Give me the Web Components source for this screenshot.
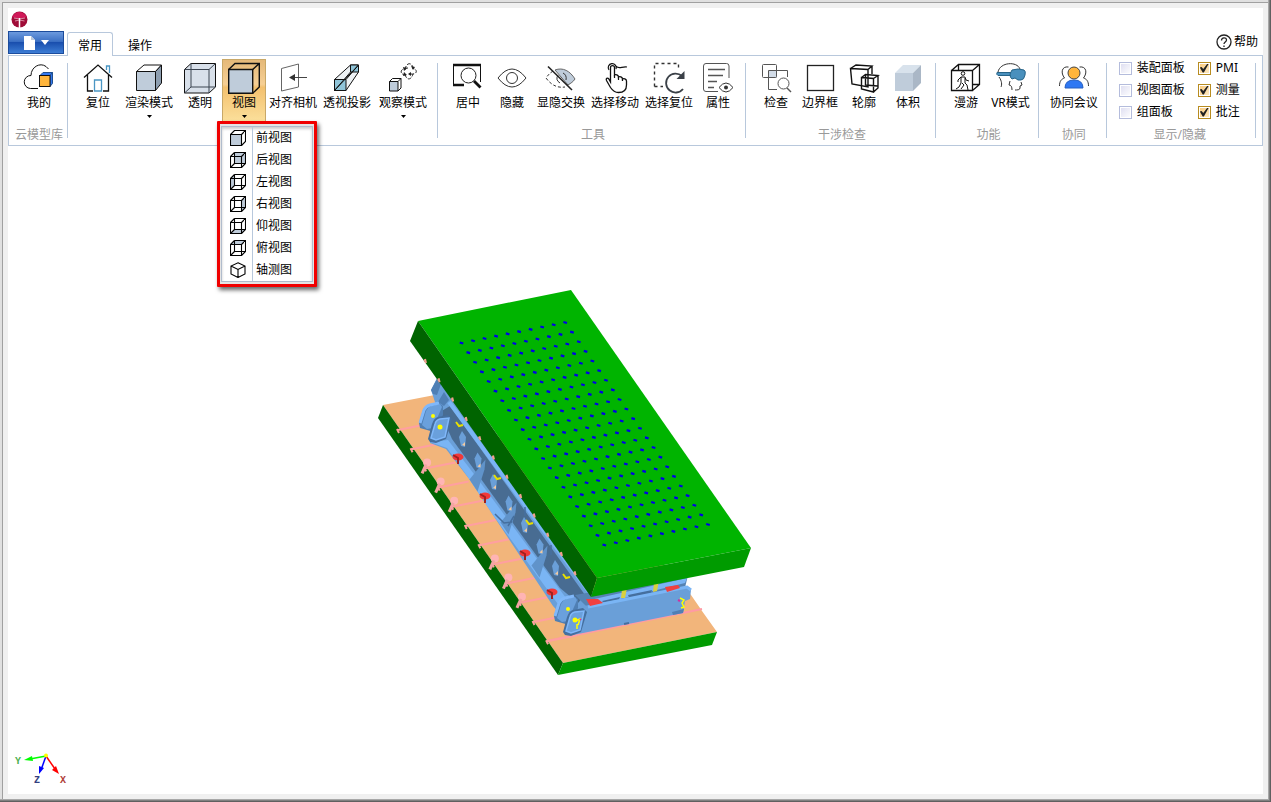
<!DOCTYPE html>
<html lang="zh-CN">
<head>
<meta charset="utf-8">
<title>三维模型查看器</title>
<style>
  html, body {
    height: 100%;
    margin: 0;
  }

  body {
    font: 12px/16px "Noto Sans", "Noto Sans CJK SC", sans-serif;
    color: #000;
    overflow: hidden;
  }
</style>
</head>
<body>
<app-window>
  <app-tabs slot="header"></app-tabs>
  <ribbon-bar slot="header">
    <ribbon-group label="云模型库" class="first">
      <ribbon-button icon="cloud" label="我的"></ribbon-button>
    </ribbon-group>
    <ribbon-group>
      <ribbon-button icon="house" label="复位"></ribbon-button>
      <ribbon-button icon="render" label="渲染模式" drop></ribbon-button>
      <ribbon-button icon="glass" label="透明"></ribbon-button>
      <ribbon-button icon="view" label="视图" drop active>
        <view-menu slot="menu">
          <view-item icon="front">前视图</view-item>
          <view-item icon="back">后视图</view-item>
          <view-item icon="left">左视图</view-item>
          <view-item icon="right">右视图</view-item>
          <view-item icon="bottom">仰视图</view-item>
          <view-item icon="top">俯视图</view-item>
          <view-item icon="iso">轴测图</view-item>
        </view-menu>
      </ribbon-button>
      <ribbon-button icon="align" label="对齐相机"></ribbon-button>
      <ribbon-button icon="perspective" label="透视投影"></ribbon-button>
      <ribbon-button icon="orbit" label="观察模式" drop></ribbon-button>
    </ribbon-group>
    <ribbon-group label="工具">
      <ribbon-button icon="center" label="居中"></ribbon-button>
      <ribbon-button icon="eye" label="隐藏"></ribbon-button>
      <ribbon-button icon="swap" label="显隐交换"></ribbon-button>
      <ribbon-button icon="hand" label="选择移动"></ribbon-button>
      <ribbon-button icon="reselect" label="选择复位"></ribbon-button>
      <ribbon-button icon="props" label="属性"></ribbon-button>
    </ribbon-group>
    <ribbon-group label="干涉检查">
      <ribbon-button icon="check" label="检查"></ribbon-button>
      <ribbon-button icon="bounds" label="边界框"></ribbon-button>
      <ribbon-button icon="outline" label="轮廓"></ribbon-button>
      <ribbon-button icon="volume" label="体积"></ribbon-button>
    </ribbon-group>
    <ribbon-group label="功能">
      <ribbon-button icon="walk" label="漫游"></ribbon-button>
      <ribbon-button icon="vr" label="VR模式"></ribbon-button>
    </ribbon-group>
    <ribbon-group label="协同">
      <ribbon-button icon="meeting" label="协同会议"></ribbon-button>
    </ribbon-group>
    <ribbon-group label="显示/隐藏" class="checks">
      <ribbon-check label="装配面板"></ribbon-check>
      <ribbon-check label="PMI" checked></ribbon-check>
      <ribbon-check label="视图面板"></ribbon-check>
      <ribbon-check label="测量" checked></ribbon-check>
      <ribbon-check label="组面板"></ribbon-check>
      <ribbon-check label="批注" checked></ribbon-check>
    </ribbon-group>
  </ribbon-bar>
  <model-viewport></model-viewport>
</app-window>

<script>
// 32x32 ribbon icons
const ICONS = {
  cloud: `
    <path d="M15 26.500H7.500A6.500 6.500 0 0 1 8 13.500C8 5 17 0 23 4.500L25.500 7" />
    <path d="M17 13.500l3-3h9.500l-2.500 3z" fill="#3478f0" stroke="#205090" />
    <path d="M27 13.500l2.500-3v11L27 24.500z" fill="#3478f0" stroke="#205090" />
    <rect x="16.500" y="13.500" width="10.500" height="11" fill="#ffb53b" />`,
  house: `
    <path d="M2 15.500L16 3l14 12.500M5.500 13v16H11M26.500 13v16H21" stroke-width="1.300" />
    <path d="M24.500 8V4h3v7M12.500 29V18h7v11z" stroke="#4a96c4" stroke-width="1.300" />`,
  render: `
    <path d="M3.500 9.500h19v19h-19z" fill="#bfccda" />
    <path d="M3.500 9.500L11 3h17.500l-6 6.500z" fill="#fff" />
    <path d="M22.500 9.500l6-6.500v18l-6 7.500z" fill="#8d9eb0" />`,
  glass: `
    <path d="M.5 7.500L7 1.500h24.500V25l-6.500 6H.5z" fill="#d8e0ea" />
    <path d="M.5 7.500H25V31M25 7.500l6.500-6M7 1.500V25h24.500M7 25l-6.500 6" stroke="#3b4450" />`,
  view: `
    <path d="M.7 7.500h24v23.800H.7z" fill="#bfccda" stroke-width="1.400" />
    <path d="M.7 7.500L7 1.500h24.300V25l-6.600 6.300M24.700 7.500l6.600-6" stroke-width="1.400" />`,
  align: `
    <path d="M4.500 6.500L21.500 2v23L4.500 29z" stroke="#666" />
    <path d="M30 15.500H16" stroke="#444" /><path d="M12 15.500l6-3.500v7z" fill="#333" stroke="none" />`,
  perspective: `
    <path d="M3.500 17.500L19.500 3h8v7L15 28.500H3.500z" fill="#eef2f5" />
    <path d="M3.500 17.500H15v11H3.500zM19.500 3h8v7h-8z" fill="#8fc4d8" />
    <path d="M3.500 28.500L27.500 3M15 17.500L27.500 3M3.500 28.500L19.500 10" />`,
  orbit: `
    <path d="M2.500 19.500h8.500v9.500H2.500z" fill="#bfccda" /><path d="M2.500 19.500l3-3h8.500v9.500l-3 3M11 19.500l3-3" />
    <g stroke="#222" stroke-dasharray="4 1.500">
      <path d="M18 8C19 0 25 0 26 6M18 12c1 6 6 7 8 0" />
      <path d="M23 12c8 1 8-5 2-6M21 6c-8 0-9 6-3 7" />
    </g>
    <path d="M16 5l4 1-3 3zM24 4l4 1-2 3zM24 10l-3 2 3 2zM17 10l3 3-4 1z" fill="#222" stroke="none" />`,
  center: `
    <path d="M1.500 23V2.500h27V20" /><path d="M1 3h28M1 23h11" stroke-width="2.500" />
    <circle cx="16.500" cy="13.500" r="7.500" fill="#fff" stroke="#222" /><path d="M22 19l6.500 6.500" stroke-width="2.800" />`,
  eye: `
    <path d="M2 16Q9 7 16 7t14 9Q23 25 16 25T2 16z" stroke="#333" />
    <circle cx="16" cy="16" r="5.500" stroke="#333" />`,
  swap: `
    <path d="M10 8c8-3 15 1 20 9-2 3-4 4-7 6z" fill="#bfccda" stroke="#666" />
    <path d="M8 9c-3 2-5 4-7 7 6 8 12 10 19 9" stroke="#333" stroke-dasharray="3 2" />
    <path d="M13 13q-3 5 2 8M18 11q4 2 3 7" stroke="#333" /><path d="M3 4.500L27 28" stroke="#222" stroke-width="1.600" />`,
  hand: `
    <path d="M11.500 20V5.500c0-2.500 4-2.500 4 0V13c1-1 4 0 4 2 1-1 4 0 4 2 1-1 4 0 4 2v4c0 5-3 7.500-8 7.500-4 0-6-2-8-5l-4-7c-1-2 1-3 2-2z" fill="#fff" stroke-width="1.300" />
    <path d="M15.500 13v3M19.500 15v3M23.500 17v2M10 8a4 4 0 1 1 7-1M17 4c3 4 6 0 11 1" stroke-width="1.200" />`,
  reselect: `
    <path d="M1.500 24.500v-23h24v7M1.500 24.500H10" stroke="#333" stroke-dasharray="3 3" stroke-width="1.400" />
    <path d="M29 14a9.500 9.500 0 1 0 1 13" stroke="#3a4047" stroke-width="1.800" />
    <path d="M31.500 9v8h-8z" fill="#3a4047" stroke="none" />`,
  props: `
    <path d="M16 29.500H4Q1.500 29.500 1.500 27V4Q1.500 1.500 4 1.500h20.500Q27 1.500 27 4v12" stroke="#555" />
    <path d="M6 7.500h17M6 13.500h15M6 19.500h9M6 25.500h6" stroke="#555" stroke-width="1.300" />
    <path d="M17 25.500q7-9 14 0-7 9-14 0z" fill="#fff" stroke="#333" /><circle cx="24" cy="25.500" r="2" fill="#333" stroke="none" />`,
  check: `
    <rect x="9" y="8" width="8" height="8" fill="#d2dce8" stroke="none" />
    <g stroke="#555"><rect x="2.500" y="2.500" width="14" height="13" rx="1" /><path d="M17 27.500H8.500V8.500h19V15" />
    <circle cx="23.500" cy="21.500" r="5.500" fill="#fff" /><path d="M27 26l4 4" stroke-width="1.400" /></g>`,
  bounds: `<rect x="3.500" y="3.500" width="26" height="25" stroke="#222" stroke-width="1.300" />`,
  outline: `
    <path d="M2.500 6.500L20 7.500V25L4 22zM2.500 6.500L8 3l16 1-4 3.500M24 4v8" stroke-width="1.400" />
    <path d="M13.500 15.500l12 1V30l-12-3zM13.500 15.500l4-3 12.500 1-4.500 3M30 13.500V26l-4.500 4M17.500 12.500V23l12 1" stroke-width="1.400" />`,
  volume: `
    <path d="M3 11h18v18H3z" fill="#bfccda" stroke="none" />
    <path d="M3 11l8-8h18l-8 8z" fill="#d8e2ec" stroke="none" /><path d="M21 11l8-8v18l-8 8z" fill="#aab7c6" stroke="none" />`,
  walk: `
    <path d="M1.500 8.500h21v20h-21zM1.500 8.500l7-6h21v20l-7 6M22.500 8.500l7-6M8.500 2.500v6M22.500 22.500h7" stroke-width="1.300" />
    <circle cx="13" cy="11.500" r="1.800" fill="#fff" />
    <path d="M11 15h4l1 3 3 1M11 15l-3 3v2M11 15v6l-2 4-3 2M15 16v5l2 2 1 5M12 21l2 2-3 4" />`,
  vr: `
    <path d="M4 10C6 0 23-1 26 7M27 20l1 3-2 1v2c0 2-3 2-5 2M5 15c3 4 3 8 2 10M16 19l-1 4q3 0 3 5" stroke="#333" />
    <path d="M3 10.500h14v3H4q-2-1-1-3z" fill="#4a90bd" stroke="#276488" />
    <path d="M18 8q6-2 12 0 2 1 1 5-1 5-4 5h-3l-3-2-3 1q-2-1-2-5z" fill="#4a90bd" stroke="#276488" />`,
  meeting: `
    <path d="M10.500 5c-7-1-8 6-4 11-3 1-5 3-5 8M21.500 5c7-1 8 6 4 11 3 1 5 3 5 8" stroke="#333" />
    <circle cx="16" cy="11" r="6" fill="#ffb53b" stroke="#444" /><path d="M7 26q0-8 9-8t9 8z" fill="#2f78f3" stroke="#2860c0" />`
};

// 16x16 cube icons, each with another face filled
const CUBE = `<path d="M.5 4.500h11v11H.5zM4.500.5h11v11l-4 4M.5 4.500l4-4M11.500 4.500l4-4M4.500.5v11h11M.5 15.500l4-4" />`;
const face = d => `<path d="${d}" fill="#bfccda" stroke="none" />` + CUBE;

const VIEW_ICONS = {
  front: `<path d="M.5 4.500h11v11H.5z" fill="#bfccda" /><path d="M.5 4.500l4-4h11v11l-4 4M11.500 4.500l4-4" />`,
  back: face('M4.500.5h11v11h-11z'),
  left: face('M.5 4.500l4-4v11l-4 4z'),
  right: face('M11.500 4.500l4-4v11l-4 4z'),
  bottom: face('M.5 15.500l4-4h11l-4 4z'),
  top: face('M.5 4.500l4-4h11l-4 4z'),
  iso: `<path d="M8 .8L15 4v8l-7 3.500L1 12V4zM1 4l7 3.500L15 4M8 7.500v8" fill="#fff" />`
};

class AppWindow extends HTMLElement {
  constructor() {
    super();
    this.attachShadow({mode: 'open'}).innerHTML = `
      <style>
        :host {
          display: flex;
          box-sizing: border-box;
          height: 100%;
          padding: 2px 3px 3px 2px;
          background: #f0f0f0;
          box-shadow: inset -1px -1px #606060, inset -2px -2px #808080, inset -3px -3px #a8a8a8, inset 2px 2px #e0e0e0;
        }
        .frame {
          flex: 1;
          min-width: 0;
          display: flex;
          flex-direction: column;
          padding: 5px;
          border-left: 1px solid #a0a0a0;
          border-top: 1px solid #a0a0a0;
        }
        .client {
          flex: 1;
          min-height: 0;
          display: flex;
          flex-direction: column;
          background: #fff;
        }
        ::slotted(model-viewport) { flex: 1; }
      </style>
      <div class="frame"><div class="client">
        <slot name="header"></slot>
        <slot></slot>
      </div></div>`;
  }
}

class AppTabs extends HTMLElement {
  constructor() {
    super();
    this.attachShadow({mode: 'open'}).innerHTML = `
      <style>
        :host { display: block; }
        button {
          font: inherit;
          color: inherit;
          border: 0;
          background: none;
          padding: 0;
        }
        .title {
          height: 23px;
          display: flex;
          align-items: center;
          padding-left: 3px;
        }
        .row {
          display: flex;
          height: 24px;
        }
        .file {
          width: 56px;
          height: 23px;
          display: flex;
          align-items: center;
          justify-content: center;
          gap: 6px;
          border: 1px solid #1c4c9c;
          background: linear-gradient(#6c9ade, #3c70c4 45%, #1a4fae 50%, #3c7cd4);
        }
        .tab {
          box-sizing: border-box;
          width: 46px;
          height: 24px;
          margin: 1px 0 0 3px;
          padding-top: 4px;
        }
        .tab + .tab { margin-left: 4px; }
        .tab[aria-selected=true] {
          position: relative;
          padding-top: 2px;
          border: 1px solid #b8c8dc;
          border-bottom: 0;
          border-radius: 3px 3px 0 0;
          background: #fff;
        }
        .help {
          display: flex;
          align-items: center;
          gap: 2px;
          margin-left: auto;
          padding-right: 5px;
          height: 22px;
        }
      </style>
      <div class="title">
        <svg width="17" height="17" viewBox="0 0 17 17">
          <circle cx="8.500" cy="8.500" r="8" fill="#a00c38" />
          <path d="M1 6Q8-4 16 6L9 8z" fill="#d01858" />
          <path d="M8.500 8L3 7M8.500 8L14 7M8.500 9L4 10M8.500 9l5 1" stroke="#d88aa0" fill="none" />
          <path d="M8.500 17V7" stroke="#fff" stroke-width="1.500" />
        </svg>
      </div>
      <div class="row">
        <button class="file" aria-label="文件">
          <svg width="11" height="14" viewBox="0 0 11 14"><path d="M0 0h7l4 4v10H0z" fill="#fff" /><path d="M7 0v4h4z" fill="#b9c6da" /></svg>
          <svg width="8" height="5" viewBox="0 0 8 5"><path d="M0 0h8L4 5z" fill="#fff" /></svg>
        </button>
        <button class="tab" role="tab" aria-selected="true">常用</button>
        <button class="tab" role="tab" aria-selected="false">操作</button>
        <button class="help">
          <svg width="16" height="16" viewBox="0 0 16 16" fill="none" stroke="#222">
            <circle cx="8" cy="8" r="7" stroke-width="1.300" />
            <path d="M5.500 6.500C5.500 3 10.500 3 10.500 6 10.500 8 8 8 8 10M8 11.500V13" stroke-width="1.300" />
          </svg>
          帮助
        </button>
      </div>`;
  }
}

class RibbonBar extends HTMLElement {
  constructor() {
    super();
    this.attachShadow({mode: 'open'}).innerHTML = `
      <style>
        :host {
          display: flex;
          align-items: flex-start;
          box-sizing: border-box;
          height: 91px;
          border: 1px solid #b8c8dc;
        }
      </style>
      <slot></slot>`;
  }
}

class RibbonGroup extends HTMLElement {
  constructor() {
    super();
    this.attachShadow({mode: 'open'}).innerHTML = `
      <style>
        :host {
          display: flex;
          flex: none;
          flex-direction: column;
          box-sizing: border-box;
          height: 88px;
          padding: 3px 6px 0 8px;
          background: linear-gradient(#b8c8dc, #b8c8dc) right 7px / 1px 75px no-repeat;
        }
        :host(.first) { padding: 3px 5px 0 6px; }
        :host(.checks) { padding: 1px 15px 0 12px; }
        .items {
          display: flex;
          flex: none;
          height: 68px;
          justify-content: center;
        }
        :host(.checks) .items {
          display: grid;
          grid-template-columns: 79px 43px;
          grid-auto-rows: 22px;
          align-content: start;
          height: 70px;
        }
        .label {
          color: #999;
          text-align: center;
          white-space: nowrap;
        }
      </style>
      <div class="items"><slot></slot></div>
      <div class="label"></div>`;
  }

  connectedCallback() {
    this.shadowRoot.querySelector('.label').textContent = this.getAttribute('label');
  }
}

class RibbonButton extends HTMLElement {
  constructor() {
    super();
    this.attachShadow({mode: 'open'}).innerHTML = `
      <style>
        :host {
          display: block;
          position: relative;
        }
        button {
          display: flex;
          flex-direction: column;
          align-items: center;
          box-sizing: border-box;
          min-width: 44px;
          height: 63px;
          padding: 3px 3px 0;
          font: inherit;
          color: inherit;
          white-space: nowrap;
          border: 0;
          background: none;
        }
        :host([drop]) button { padding: 3px 5px 0; }
        :host([active]) button {
          background: linear-gradient(#e4b878, #f6cf94 40%, #f3c06e 45%, #fbe09c);
          box-shadow: inset 0 0 0 1px #c8a868;
        }
        .icon {
          fill: none;
          stroke: #111;
          flex: none;
        }
        span { padding-top: 1px; }
        .arrow {
          display: none;
          margin-top: 4px;
        }
        :host([drop]) .arrow { display: block; }
      </style>
      <button>
        <svg class="icon" width="32" height="32" viewBox="0 0 32 32"></svg>
        <span></span>
        <svg class="arrow" width="5" height="3" viewBox="0 0 5 3"><path d="M0 0h5L2.500 3z" /></svg>
      </button>
      <slot name="menu"></slot>`;
  }

  connectedCallback() {
    const menu = this.querySelector('[slot=menu]');
    this.shadowRoot.querySelector('.icon').innerHTML = ICONS[this.getAttribute('icon')];
    this.shadowRoot.querySelector('span').textContent = this.getAttribute('label');

    if (menu) {
      this.shadowRoot.querySelector('button').addEventListener('click', () => {
        this.toggleAttribute('active');
        menu.hidden = !this.hasAttribute('active');
      });
    }
  }
}

class ViewMenu extends HTMLElement {
  constructor() {
    super();
    this.attachShadow({mode: 'open'}).innerHTML = `
      <style>
        :host {
          display: block;
          position: absolute;
          z-index: 10;
          left: -5px;
          top: 62px;
          box-sizing: border-box;
          width: 100px;
          padding: 2px 1px;
          background: #e4e4e4;
          border: 3px solid #f00000;
          border-radius: 1px;
          box-shadow: 2px 3px 4px rgb(0 0 0 / 60%);
        }
        :host([hidden]) { display: none; }
        .list {
          background: #fff;
          border: 1px solid #b0bccc;
          box-shadow: inset 0 2px 3px rgb(0 0 0 / 20%);
        }
      </style>
      <div class="list"><slot></slot></div>`;
  }
}

class ViewItem extends HTMLElement {
  constructor() {
    super();
    this.attachShadow({mode: 'open'}).innerHTML = `
      <style>
        :host { display: block; }
        button {
          display: flex;
          align-items: center;
          width: 100%;
          height: 22px;
          padding: 0 0 0 8px;
          gap: 6px;
          font: inherit;
          color: inherit;
          border: 0;
          background: none;
        }
        button:hover { background: #fbe6b8; }
        svg {
          fill: none;
          stroke: #000;
          stroke-width: 1.100;
        }
        span {
          padding: 3px 0 3px 3px;
          border-left: 1px solid #b8c8dc;
          white-space: nowrap;
        }
      </style>
      <button>
        <svg width="16" height="16" viewBox="0 0 16 16"></svg>
        <span><slot></slot></span>
      </button>`;
  }

  connectedCallback() {
    this.shadowRoot.querySelector('svg').innerHTML = VIEW_ICONS[this.getAttribute('icon')];
  }
}

class RibbonCheck extends HTMLElement {
  constructor() {
    super();
    this.attachShadow({mode: 'open'}).innerHTML = `
      <style>
        :host { display: block; }
        label {
          display: flex;
          align-items: center;
          gap: 5px;
          height: 22px;
          white-space: nowrap;
        }
        input {
          appearance: none;
          flex: none;
          box-sizing: border-box;
          width: 13px;
          height: 13px;
          margin: 0;
          border: 1px solid #b4bcdc;
          background: linear-gradient(135deg, #dcdcf0, #fff);
          box-shadow: inset 0 0 0 1px #fff;
        }
        input:checked {
          border-color: #b88c20;
          background: linear-gradient(135deg, #fbc878, #fdecc8);
        }
        input:checked::before {
          content: "";
          display: block;
          width: 9px;
          height: 9px;
          margin: 1px;
          background: #222;
          clip-path: polygon(0 45%, 20% 38%, 38% 62%, 85% 0, 100% 0, 45% 100%, 32% 100%);
        }
      </style>
      <label><input type="checkbox"><span></span></label>`;
  }

  connectedCallback() {
    this.shadowRoot.querySelector('span').textContent = this.getAttribute('label');
    this.shadowRoot.querySelector('input').checked = this.hasAttribute('checked');
  }
}

class ModelViewport extends HTMLElement {
  constructor() {
    super();
    this.attachShadow({mode: 'open'}).innerHTML = `
      <style>
        :host {
          display: block;
          position: relative;
          min-height: 0;
          overflow: hidden;
        }
        .model {
          display: block;
          width: 100%;
          height: 100%;
        }
        .axes {
          position: absolute;
          left: 4px;
          bottom: 6px;
        }
        text {
          font: bold 10px "Liberation Mono", monospace;
        }
      </style>
      <svg class="model" viewBox="8 146 1255 648"></svg>
      <svg class="axes" width="60" height="42" viewBox="0 0 60 42">
        <path d="M34 10L18 13" stroke="#0f0" stroke-width="1.500" /><path d="M12 14l8-4 1 5z" fill="#0f0" />
        <path d="M34 10l-5 14" stroke="#00f" stroke-width="1.500" /><path d="M27 28l0-8 5 2z" fill="#00f" />
        <path d="M34 10l9 13" stroke="red" stroke-width="1.500" /><path d="M47 28l-7-4 4-4z" fill="red" />
        <circle cx="34" cy="9.500" r="2" fill="#ff0" />
        <text x="3" y="18" fill="#4caf50">Y</text>
        <text x="22" y="37" fill="#334080">Z</text>
        <text x="48" y="37" fill="#b04038">X</text>
      </svg>`;
  }

  connectedCallback() {
    this.shadowRoot.querySelector('.model').innerHTML = this.base() + this.machine() + this.plate();
  }

  poly(points, fill) {
    return `<polygon points="${points}" fill="${fill}" />`;
  }

  // lower slab with the pink pins along its edge
  base() {
    let out = this.poly('383,405 440,394 640,540 691,595 700,608 702,611 717,632 563,663', '#f2b57b')
      + this.poly('383,405 378,418 558,675 563,663', '#006400')
      + this.poly('563,663 717,632 712,645 558,675', '#009b00')
      + '<path d="M547 641L702 609" stroke="#ff9aa4" stroke-width="2" />';

    for (let i = 0; i < 12; i++) {
      const x = 398 + i * 13.55;
      const y = 430 + i * 19.2;
      out += `<path d="M${x} ${y}l30-6M${x - 1} ${y - 1}l2 4" stroke="#ff9fa0" stroke-width="2" />`;
      if ([2, 3, 4, 7, 8, 9].includes(i)) {
        out += `<circle cx="${x + 2}" cy="${y - 6}" r="4" fill="#ffb4b4" /><path d="M${x + 1} ${y - 4}l-4 9" stroke="#f4a4a4" stroke-width="3" />`;
      }
    }
    return out;
  }

  bracket(x, y) {
    return `<g transform="translate(${x} ${y})">
      <path d="M0 14L4 1Q6-3 10-4L20-6l4 3v9l-9 17-14-4z" fill="#4f7fb4" />
      <path d="M3 16L7 2Q9-2 12-3l9-2 2 3-9 21-6 1z" fill="#6aa0dc" />
      <path d="M1 14L5 1Q7-3 11-4l9-2" fill="none" stroke="#80b8fa" stroke-width="3" />
      <path d="M9 30l4-15q2-6 6-7l10-2 4 4-6 20-10 4-6-1z" fill="#456f9e" />
      <path d="M12 29l4-14q1-4 5-5l9-1-4 19-9 3z" fill="#6aa0dc" stroke="#80b8fa" stroke-width="1.500" />
      <circle cx="14" cy="7" r="2" fill="#ff0" /><circle cx="21" cy="18" r="2.500" fill="#ff0" />
    </g>`;
  }

  machine() {
    let out = this.poly('431,390 437,378 470,420 591,590 592,606 570,625 553,606 493,515 470,480 446,449 430,443 430,418 437,408', '#6a9fd8')
      + this.poly('430,442 448,440 480,482 566,598 560,607 493,515 470,480 447,448', '#7ab5f5')
      + this.poly('440,412 450,406 585,595 578,603 560,588 452,439', '#486c92')
      + '<path d="M449 402L592 596" stroke="#7ab5f5" stroke-width="4" />'
      + this.poly('431,390 437,379 441,384 437,395 433,394', '#4f7fb4')
      + this.poly('438,402 444,392 449,400 444,406', '#4f7fb4');

    // ribs and cut-outs of the long side beam
    for (let i = 0; i < 7; i++) {
      const x = 462 + i * 15.5;
      const y = 446 + i * 21.5;
      if (i % 2) {
        out += this.poly(`${x - 8},${y + 12} ${x + 8},${y - 8} ${x + 7},${y + 2} ${x},${y + 24}`, '#6093ca');
      }
      out += this.poly(`${x - 3},${y - 9} ${x},${y - 15} ${x + 4},${y - 9} ${x + 3},${y + 1} ${x - 1},${y}`, '#6a9fd8')
        + this.poly(`${x},${y - 1} ${x + 3},${y - 4} ${x + 3},${y}`, '#f2c9a0');
    }
    out += '<path d="M495 514l9 9 8-1M508 526l6-10M551 545v10M525 507v9" stroke="#456f9e" fill="none" stroke-width="1.500" />';
    for (const [x, y] of [[456, 422], [494, 475], [526, 520], [563, 574]]) {
      out += `<path d="M${x} ${y}l3 4 4-1" fill="none" stroke="#e8e000" stroke-width="2" />`;
    }
    for (const [x, y] of [[458, 457], [485, 496], [525, 553], [552, 592]]) {
      out += `<ellipse cx="${x}" cy="${y}" rx="5.500" ry="3.500" fill="#f23838" /><path d="M${x - 5} ${y - 2}l5 3v6" stroke="#a02020" stroke-width="2" fill="none" />`;
    }

    // front beam
    out += this.poly('575,595 688,575 684,592 588,608', '#5583b3')
      + this.poly('590,600 687,578 685,583 604,603', '#7ab5f5')
      + this.poly('602,601 620,597 618,602 606,605', '#456f9e')
      + this.poly('628,595 652,590 650,596 630,600', '#456f9e')
      + this.poly('584,606 682,588 689,587 691,590 690,599 685,601 683,613 573,635 567,633', '#6a9fd8')
      + '<path d="M588 607L682 588l5-1 4 3" fill="none" stroke="#7ab5f5" stroke-width="3" />'
      + this.poly('586,599 598,599 603,603 590,606', '#f04040')
      + this.poly('665,587 678,585 680,588 667,592', '#f04040')
      + this.poly('622,590 627,588 625,598 621,598', '#d8d040')
      + this.poly('654,583 659,581 657,591 653,592', '#d8d040')
      + this.poly('672,612 684,609 683,613 673,615', '#4f7fb4')
      + '<path d="M624 624l5-1" stroke="#456f9e" stroke-width="2" />'
      + this.bracket(419, 409) + this.bracket(554, 602)
      + '<path d="M680 598l4 2-2 3 2 4-3 1M575 621l5-2-2 6M577 624v5" fill="none" stroke="#ff0" stroke-width="1.500" />'
      + '<path d="M678 600l2 1M580 619l1 1" stroke="#d030a0" stroke-width="2" />';
    return out;
  }

  // upper slab with its grid of holes
  plate() {
    let out = this.poly('418,321 571,290 751,548 597,578', '#00b400')
      + this.poly('418,321 410,341 591,597 597,578', '#006400')
      + this.poly('597,578 751,548 744,567 591,597', '#009b00');

    for (let row = 0; row < 22; row++) {
      for (let col = 0; col < 10; col++) {
        const x = 461.5 + row * 6.8 + col * 11.52;
        const y = 343 + row * 9.62 - col * 2.28;
        out += `<path d="M${x - 1.8} ${y - .5}l3.600 1" stroke="#0000e8" stroke-width="2.200" />`;
      }
    }
    for (let i = 0; i < 12; i++) {
      out += `<path d="M${425 + i * 13.6} ${359 + i * 19.3}l1 4m-2-2l2-1" stroke="#f0a090" stroke-width="2" />`;
    }
    return out;
  }
}

customElements.define('app-window', AppWindow);
customElements.define('app-tabs', AppTabs);
customElements.define('ribbon-bar', RibbonBar);
customElements.define('ribbon-group', RibbonGroup);
customElements.define('ribbon-button', RibbonButton);
customElements.define('view-menu', ViewMenu);
customElements.define('view-item', ViewItem);
customElements.define('ribbon-check', RibbonCheck);
customElements.define('model-viewport', ModelViewport);
</script>
</body>
</html>
